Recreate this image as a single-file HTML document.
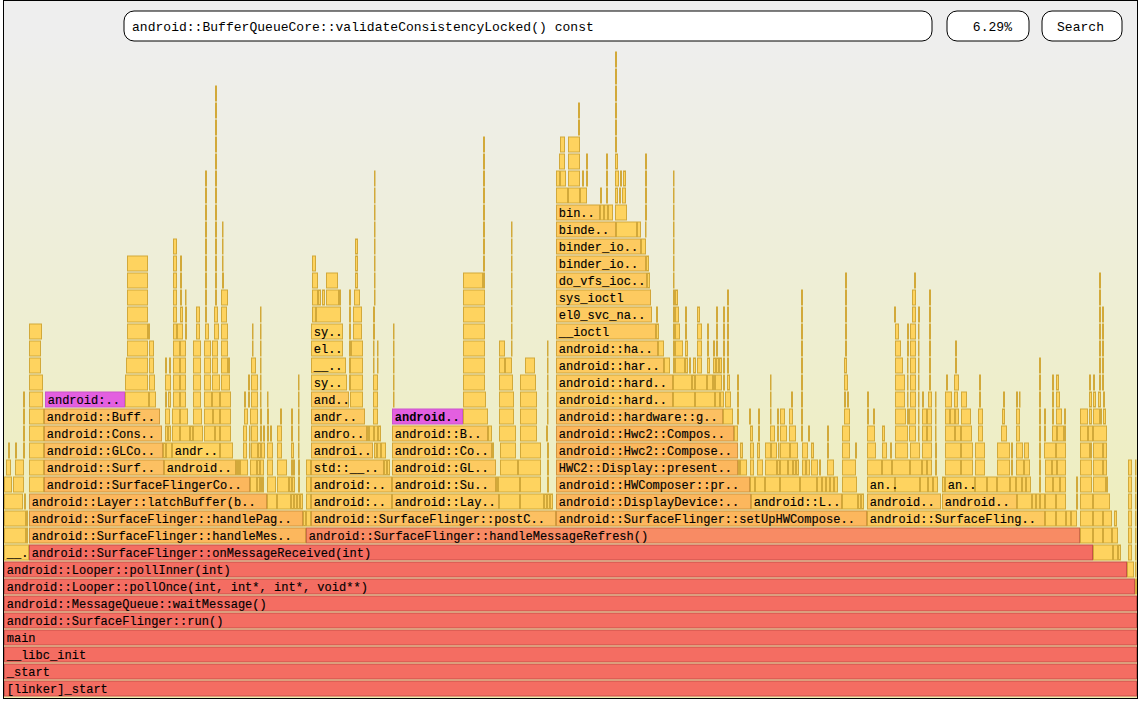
<!DOCTYPE html>
<html><head><meta charset="utf-8"><style>
html,body{margin:0;padding:0;background:#fff;width:1141px;height:702px;overflow:hidden}
#frame{position:absolute;left:3px;top:0;width:1133px;height:697px;border:1px solid #000;
background:linear-gradient(#eeeeee 0%, #eeeeee 5%, #eeeeb0 95%, #eeeeb0 100%);overflow:hidden}
svg{position:absolute;left:0;top:0}
.h text{font-family:"Liberation Mono",monospace;font-size:13px;letter-spacing:0.026px;fill:#000}
.t text{font-family:"Liberation Mono",monospace;font-size:12px;letter-spacing:0.024px;fill:#000;stroke:#000;stroke-width:0.15px}
</style></head><body>
<div id="frame"></div>
<svg width="1141" height="702" viewBox="0 0 1141 702" style="position:absolute;left:0;top:0">
<g fill="#fff" stroke="#000" stroke-width="1">
<rect x="124" y="11" width="808" height="30" rx="10" ry="10"/>
<rect x="947" y="11" width="82" height="30" rx="10" ry="10"/>
<rect x="1042" y="11" width="80" height="30" rx="10" ry="10"/>
</g>
<g class="h">
<text x="132" y="31">android::BufferQueueCore::validateConsistencyLocked() const</text>
<text x="1012" y="31" text-anchor="end">6.29%</text>
<text x="1057" y="31">Search</text>
</g>
<g stroke-width="1" ><rect x="4.5" y="681" width="1132" height="15" fill="#f46d62" stroke="#c85048"/>
<rect x="4.5" y="664" width="1132" height="15" fill="#f46d62" stroke="#c85048"/>
<rect x="4.5" y="647" width="1132" height="15" fill="#f46d62" stroke="#c85048"/>
<rect x="4.5" y="630" width="1132" height="15" fill="#f46d62" stroke="#c85048"/>
<rect x="4.5" y="613" width="1132" height="15" fill="#f46d62" stroke="#c85048"/>
<rect x="4.5" y="596" width="1132" height="15" fill="#f46d62" stroke="#c85048"/>
<rect x="4.5" y="579" width="1130" height="15" fill="#f46d62" stroke="#c85048"/>
<rect x="1135.5" y="579" width="1" height="15" fill="#fed35f" stroke="#d2a93a"/>
<rect x="4.5" y="562" width="1122" height="15" fill="#f46d62" stroke="#c85048"/>
<rect x="1127.5" y="562" width="6" height="15" fill="#fed35f" stroke="#d2a93a"/>
<rect x="1135.5" y="562" width="0.5" height="15" fill="#fed35f" stroke="#d2a93a"/>
<rect x="4.5" y="545" width="24" height="15" fill="#fed35f" stroke="#d2a93a"/>
<rect x="29.5" y="545" width="1063" height="15" fill="#f46d62" stroke="#c85048"/>
<rect x="1093.5" y="545" width="19" height="15" fill="#fed35f" stroke="#d2a93a"/>
<rect x="1113.5" y="545" width="4" height="15" fill="#fed35f" stroke="#d2a93a"/>
<rect x="1118.5" y="545" width="2" height="15" fill="#fed35f" stroke="#d2a93a"/>
<rect x="1128.5" y="545" width="3" height="15" fill="#fed35f" stroke="#d2a93a"/>
<rect x="1135.5" y="545" width="0.5" height="15" fill="#fed35f" stroke="#d2a93a"/>
<rect x="4.5" y="528" width="21" height="15" fill="#fed35f" stroke="#d2a93a"/>
<rect x="26.5" y="528" width="1" height="15" fill="#fed35f" stroke="#d2a93a"/>
<rect x="29.5" y="528" width="276" height="15" fill="#fcb75d" stroke="#d2953e"/>
<rect x="306.5" y="528" width="773" height="15" fill="#f88b64" stroke="#cc6a48"/>
<rect x="1080.5" y="528" width="12" height="15" fill="#fed35f" stroke="#d2a93a"/>
<rect x="1093.5" y="528" width="9" height="15" fill="#fed35f" stroke="#d2a93a"/>
<rect x="1103.5" y="528" width="8" height="15" fill="#fed35f" stroke="#d2a93a"/>
<rect x="1112.5" y="528" width="5" height="15" fill="#fed35f" stroke="#d2a93a"/>
<rect x="1128.5" y="528" width="3" height="15" fill="#fed35f" stroke="#d2a93a"/>
<rect x="1135.5" y="528" width="0.5" height="15" fill="#fed35f" stroke="#d2a93a"/>
<rect x="4.5" y="511" width="21" height="15" fill="#fed35f" stroke="#d2a93a"/>
<rect x="26.5" y="511" width="1" height="15" fill="#fed35f" stroke="#d2a93a"/>
<rect x="29.5" y="511" width="273" height="15" fill="#fcb75d" stroke="#d2953e"/>
<rect x="303.5" y="511" width="2" height="15" fill="#fed35f" stroke="#d2a93a"/>
<rect x="306.5" y="511" width="4" height="15" fill="#fed35f" stroke="#d2a93a"/>
<rect x="311.5" y="511" width="244" height="15" fill="#fcc062" stroke="#d29c3e"/>
<rect x="556.5" y="511" width="310" height="15" fill="#fcb75d" stroke="#d2953e"/>
<rect x="867.5" y="511" width="177" height="15" fill="#fdca60" stroke="#d2a53a"/>
<rect x="1045.5" y="511" width="10" height="15" fill="#fed35f" stroke="#d2a93a"/>
<rect x="1056.5" y="511" width="9" height="15" fill="#fed35f" stroke="#d2a93a"/>
<rect x="1066.5" y="511" width="4" height="15" fill="#fed35f" stroke="#d2a93a"/>
<rect x="1071.5" y="511" width="5" height="15" fill="#fed35f" stroke="#d2a93a"/>
<rect x="1080.5" y="511" width="12" height="15" fill="#fed35f" stroke="#d2a93a"/>
<rect x="1093.5" y="511" width="9" height="15" fill="#fed35f" stroke="#d2a93a"/>
<rect x="1103.5" y="511" width="8" height="15" fill="#fed35f" stroke="#d2a93a"/>
<rect x="1114.5" y="511" width="2" height="15" fill="#fed35f" stroke="#d2a93a"/>
<rect x="1128.5" y="511" width="3" height="15" fill="#fed35f" stroke="#d2a93a"/>
<rect x="1135.5" y="511" width="0.5" height="15" fill="#fed35f" stroke="#d2a93a"/>
<rect x="4.5" y="494" width="18" height="15" fill="#fed35f" stroke="#d2a93a"/>
<rect x="24.5" y="494" width="1" height="15" fill="#fed35f" stroke="#d2a93a"/>
<rect x="29.5" y="494" width="237" height="15" fill="#fcb75d" stroke="#d2953e"/>
<rect x="267.5" y="494" width="9" height="15" fill="#fed35f" stroke="#d2a93a"/>
<rect x="277.5" y="494" width="13" height="15" fill="#fed35f" stroke="#d2a93a"/>
<rect x="291.5" y="494" width="2" height="15" fill="#fed35f" stroke="#d2a93a"/>
<rect x="294.5" y="494" width="2" height="15" fill="#fed35f" stroke="#d2a93a"/>
<rect x="297.5" y="494" width="2" height="15" fill="#fed35f" stroke="#d2a93a"/>
<rect x="300.5" y="494" width="2" height="15" fill="#fed35f" stroke="#d2a93a"/>
<rect x="306.5" y="494" width="4" height="15" fill="#fed35f" stroke="#d2a93a"/>
<rect x="311.5" y="494" width="80" height="15" fill="#fdca60" stroke="#d2a53a"/>
<rect x="392.5" y="494" width="106" height="15" fill="#fdca60" stroke="#d2a53a"/>
<rect x="499.5" y="494" width="20" height="15" fill="#fed35f" stroke="#d2a93a"/>
<rect x="520.5" y="494" width="23" height="15" fill="#fed35f" stroke="#d2a93a"/>
<rect x="544.5" y="494" width="2" height="15" fill="#fed35f" stroke="#d2a93a"/>
<rect x="547.5" y="494" width="2" height="15" fill="#fed35f" stroke="#d2a93a"/>
<rect x="550.5" y="494" width="2" height="15" fill="#fed35f" stroke="#d2a93a"/>
<rect x="556.5" y="494" width="194" height="15" fill="#fcb75d" stroke="#d2953e"/>
<rect x="751.5" y="494" width="90" height="15" fill="#fdca60" stroke="#d2a53a"/>
<rect x="842.5" y="494" width="15" height="15" fill="#fed35f" stroke="#d2a93a"/>
<rect x="858.5" y="494" width="2" height="15" fill="#fed35f" stroke="#d2a93a"/>
<rect x="861.5" y="494" width="2" height="15" fill="#fed35f" stroke="#d2a93a"/>
<rect x="867.5" y="494" width="73" height="15" fill="#fdca60" stroke="#d2a53a"/>
<rect x="942.5" y="494" width="74" height="15" fill="#fdca60" stroke="#d2a53a"/>
<rect x="1017.5" y="494" width="14" height="15" fill="#fed35f" stroke="#d2a93a"/>
<rect x="1032.5" y="494" width="3" height="15" fill="#fed35f" stroke="#d2a93a"/>
<rect x="1036.5" y="494" width="3" height="15" fill="#fed35f" stroke="#d2a93a"/>
<rect x="1040.5" y="494" width="4" height="15" fill="#fed35f" stroke="#d2a93a"/>
<rect x="1045.5" y="494" width="10" height="15" fill="#fed35f" stroke="#d2a93a"/>
<rect x="1056.5" y="494" width="9" height="15" fill="#fed35f" stroke="#d2a93a"/>
<rect x="1076.5" y="494" width="1" height="15" fill="#fed35f" stroke="#d2a93a"/>
<rect x="1080.5" y="494" width="12" height="15" fill="#fed35f" stroke="#d2a93a"/>
<rect x="1093.5" y="494" width="16" height="15" fill="#fed35f" stroke="#d2a93a"/>
<rect x="1128.5" y="494" width="3" height="15" fill="#fed35f" stroke="#d2a93a"/>
<rect x="1135.5" y="494" width="0.5" height="15" fill="#fed35f" stroke="#d2a93a"/>
<rect x="4.5" y="477" width="7" height="15" fill="#fed35f" stroke="#d2a93a"/>
<rect x="13.5" y="477" width="10" height="15" fill="#fed35f" stroke="#d2a93a"/>
<rect x="29.5" y="477" width="14" height="15" fill="#fed35f" stroke="#d2a93a"/>
<rect x="44.5" y="477" width="205" height="15" fill="#fcb75d" stroke="#d2953e"/>
<rect x="250.5" y="477" width="6" height="15" fill="#fed35f" stroke="#d2a93a"/>
<rect x="257.5" y="477" width="2" height="15" fill="#fed35f" stroke="#d2a93a"/>
<rect x="260.5" y="477" width="1" height="15" fill="#fed35f" stroke="#d2a93a"/>
<rect x="262.5" y="477" width="1" height="15" fill="#fed35f" stroke="#d2a93a"/>
<rect x="267.5" y="477" width="8" height="15" fill="#fed35f" stroke="#d2a93a"/>
<rect x="277.5" y="477" width="11" height="15" fill="#fed35f" stroke="#d2a93a"/>
<rect x="289.5" y="477" width="2" height="15" fill="#fed35f" stroke="#d2a93a"/>
<rect x="292.5" y="477" width="2" height="15" fill="#fed35f" stroke="#d2a93a"/>
<rect x="298.5" y="477" width="1" height="15" fill="#fed35f" stroke="#d2a93a"/>
<rect x="306.5" y="477" width="4" height="15" fill="#fed35f" stroke="#d2a93a"/>
<rect x="311.5" y="477" width="80" height="15" fill="#fdca60" stroke="#d2a53a"/>
<rect x="392.5" y="477" width="103" height="15" fill="#fdca60" stroke="#d2a53a"/>
<rect x="496.5" y="477" width="1" height="15" fill="#fed35f" stroke="#d2a93a"/>
<rect x="498.5" y="477" width="21" height="15" fill="#fed35f" stroke="#d2a93a"/>
<rect x="520.5" y="477" width="20" height="15" fill="#fed35f" stroke="#d2a93a"/>
<rect x="547.5" y="477" width="1" height="15" fill="#fed35f" stroke="#d2a93a"/>
<rect x="556.5" y="477" width="193" height="15" fill="#fcb75d" stroke="#d2953e"/>
<rect x="750.5" y="477" width="4" height="15" fill="#fed35f" stroke="#d2a93a"/>
<rect x="755.5" y="477" width="9" height="15" fill="#fed35f" stroke="#d2a93a"/>
<rect x="765.5" y="477" width="14" height="15" fill="#fed35f" stroke="#d2a93a"/>
<rect x="780.5" y="477" width="19" height="15" fill="#fed35f" stroke="#d2a93a"/>
<rect x="800.5" y="477" width="16" height="15" fill="#fed35f" stroke="#d2a93a"/>
<rect x="817.5" y="477" width="4" height="15" fill="#fed35f" stroke="#d2a93a"/>
<rect x="822.5" y="477" width="3" height="15" fill="#fed35f" stroke="#d2a93a"/>
<rect x="826.5" y="477" width="3" height="15" fill="#fed35f" stroke="#d2a93a"/>
<rect x="830.5" y="477" width="3" height="15" fill="#fed35f" stroke="#d2a93a"/>
<rect x="834.5" y="477" width="3" height="15" fill="#fed35f" stroke="#d2a93a"/>
<rect x="842.5" y="477" width="14" height="15" fill="#fed35f" stroke="#d2a93a"/>
<rect x="867.5" y="477" width="27" height="15" fill="#fed35f" stroke="#d2a93a"/>
<rect x="895.5" y="477" width="24" height="15" fill="#fed35f" stroke="#d2a93a"/>
<rect x="920.5" y="477" width="7" height="15" fill="#fed35f" stroke="#d2a93a"/>
<rect x="928.5" y="477" width="4" height="15" fill="#fed35f" stroke="#d2a93a"/>
<rect x="933.5" y="477" width="4" height="15" fill="#fed35f" stroke="#d2a93a"/>
<rect x="942.5" y="477" width="2" height="15" fill="#fed35f" stroke="#d2a93a"/>
<rect x="945.5" y="477" width="29" height="15" fill="#fed35f" stroke="#d2a93a"/>
<rect x="975.5" y="477" width="11" height="15" fill="#fed35f" stroke="#d2a93a"/>
<rect x="987.5" y="477" width="9" height="15" fill="#fed35f" stroke="#d2a93a"/>
<rect x="997.5" y="477" width="12" height="15" fill="#fed35f" stroke="#d2a93a"/>
<rect x="1010.5" y="477" width="5" height="15" fill="#fed35f" stroke="#d2a93a"/>
<rect x="1016.5" y="477" width="5" height="15" fill="#fed35f" stroke="#d2a93a"/>
<rect x="1022.5" y="477" width="3" height="15" fill="#fed35f" stroke="#d2a93a"/>
<rect x="1026.5" y="477" width="4" height="15" fill="#fed35f" stroke="#d2a93a"/>
<rect x="1039.5" y="477" width="1" height="15" fill="#fed35f" stroke="#d2a93a"/>
<rect x="1045.5" y="477" width="7" height="15" fill="#fed35f" stroke="#d2a93a"/>
<rect x="1053.5" y="477" width="6" height="15" fill="#fed35f" stroke="#d2a93a"/>
<rect x="1060.5" y="477" width="5" height="15" fill="#fed35f" stroke="#d2a93a"/>
<rect x="1076.5" y="477" width="1" height="15" fill="#fed35f" stroke="#d2a93a"/>
<rect x="1080.5" y="477" width="11" height="15" fill="#fed35f" stroke="#d2a93a"/>
<rect x="1093.5" y="477" width="12" height="15" fill="#fed35f" stroke="#d2a93a"/>
<rect x="1106.5" y="477" width="1" height="15" fill="#fed35f" stroke="#d2a93a"/>
<rect x="1128.5" y="477" width="3" height="15" fill="#fed35f" stroke="#d2a93a"/>
<rect x="1135.5" y="477" width="0.5" height="15" fill="#fed35f" stroke="#d2a93a"/>
<rect x="6.5" y="460" width="4" height="15" fill="#fed35f" stroke="#d2a93a"/>
<rect x="15.5" y="460" width="8" height="15" fill="#fed35f" stroke="#d2a93a"/>
<rect x="29.5" y="460" width="14" height="15" fill="#fed35f" stroke="#d2a93a"/>
<rect x="44.5" y="460" width="119" height="15" fill="#fcc062" stroke="#d29c3e"/>
<rect x="164.5" y="460" width="71" height="15" fill="#fdca60" stroke="#d2a53a"/>
<rect x="236.5" y="460" width="1" height="15" fill="#fed35f" stroke="#d2a93a"/>
<rect x="238.5" y="460" width="1" height="15" fill="#fed35f" stroke="#d2a93a"/>
<rect x="240.5" y="460" width="7" height="15" fill="#fed35f" stroke="#d2a93a"/>
<rect x="250.5" y="460" width="6" height="15" fill="#fed35f" stroke="#d2a93a"/>
<rect x="257.5" y="460" width="2" height="15" fill="#fed35f" stroke="#d2a93a"/>
<rect x="260.5" y="460" width="3" height="15" fill="#fed35f" stroke="#d2a93a"/>
<rect x="267.5" y="460" width="5" height="15" fill="#fed35f" stroke="#d2a93a"/>
<rect x="277.5" y="460" width="9" height="15" fill="#fed35f" stroke="#d2a93a"/>
<rect x="291.5" y="460" width="1" height="15" fill="#fed35f" stroke="#d2a93a"/>
<rect x="293.5" y="460" width="1" height="15" fill="#fed35f" stroke="#d2a93a"/>
<rect x="298.5" y="460" width="1" height="15" fill="#fed35f" stroke="#d2a93a"/>
<rect x="306.5" y="460" width="4" height="15" fill="#fed35f" stroke="#d2a93a"/>
<rect x="311.5" y="460" width="72" height="15" fill="#fdca60" stroke="#d2a53a"/>
<rect x="384.5" y="460" width="2" height="15" fill="#fed35f" stroke="#d2a93a"/>
<rect x="387.5" y="460" width="2" height="15" fill="#fed35f" stroke="#d2a93a"/>
<rect x="392.5" y="460" width="103" height="15" fill="#fdca60" stroke="#d2a53a"/>
<rect x="500.5" y="460" width="17" height="15" fill="#fed35f" stroke="#d2a93a"/>
<rect x="518.5" y="460" width="22" height="15" fill="#fed35f" stroke="#d2a93a"/>
<rect x="547.5" y="460" width="1" height="15" fill="#fed35f" stroke="#d2a93a"/>
<rect x="556.5" y="460" width="181" height="15" fill="#fcb75d" stroke="#d2953e"/>
<rect x="738.5" y="460" width="1" height="15" fill="#fed35f" stroke="#d2a93a"/>
<rect x="740.5" y="460" width="6" height="15" fill="#fed35f" stroke="#d2a93a"/>
<rect x="750.5" y="460" width="3" height="15" fill="#fed35f" stroke="#d2a93a"/>
<rect x="757.5" y="460" width="5" height="15" fill="#fed35f" stroke="#d2a93a"/>
<rect x="765.5" y="460" width="11" height="15" fill="#fed35f" stroke="#d2a93a"/>
<rect x="777.5" y="460" width="2" height="15" fill="#fed35f" stroke="#d2a93a"/>
<rect x="780.5" y="460" width="7" height="15" fill="#fed35f" stroke="#d2a93a"/>
<rect x="788.5" y="460" width="4" height="15" fill="#fed35f" stroke="#d2a93a"/>
<rect x="793.5" y="460" width="2" height="15" fill="#fed35f" stroke="#d2a93a"/>
<rect x="796.5" y="460" width="2" height="15" fill="#fed35f" stroke="#d2a93a"/>
<rect x="802.5" y="460" width="3" height="15" fill="#fed35f" stroke="#d2a93a"/>
<rect x="806.5" y="460" width="3" height="15" fill="#fed35f" stroke="#d2a93a"/>
<rect x="811.5" y="460" width="6" height="15" fill="#fed35f" stroke="#d2a93a"/>
<rect x="819.5" y="460" width="1" height="15" fill="#fed35f" stroke="#d2a93a"/>
<rect x="827.5" y="460" width="6" height="15" fill="#fed35f" stroke="#d2a93a"/>
<rect x="842.5" y="460" width="13" height="15" fill="#fed35f" stroke="#d2a93a"/>
<rect x="867.5" y="460" width="14" height="15" fill="#fed35f" stroke="#d2a93a"/>
<rect x="882.5" y="460" width="9" height="15" fill="#fed35f" stroke="#d2a93a"/>
<rect x="892.5" y="460" width="17" height="15" fill="#fed35f" stroke="#d2a93a"/>
<rect x="910.5" y="460" width="11" height="15" fill="#fed35f" stroke="#d2a93a"/>
<rect x="922.5" y="460" width="4" height="15" fill="#fed35f" stroke="#d2a93a"/>
<rect x="927.5" y="460" width="4" height="15" fill="#fed35f" stroke="#d2a93a"/>
<rect x="935.5" y="460" width="1" height="15" fill="#fed35f" stroke="#d2a93a"/>
<rect x="945.5" y="460" width="15" height="15" fill="#fed35f" stroke="#d2a93a"/>
<rect x="961.5" y="460" width="11" height="15" fill="#fed35f" stroke="#d2a93a"/>
<rect x="975.5" y="460" width="9" height="15" fill="#fed35f" stroke="#d2a93a"/>
<rect x="997.5" y="460" width="12" height="15" fill="#fed35f" stroke="#d2a93a"/>
<rect x="1011.5" y="460" width="1" height="15" fill="#fed35f" stroke="#d2a93a"/>
<rect x="1016.5" y="460" width="7" height="15" fill="#fed35f" stroke="#d2a93a"/>
<rect x="1024.5" y="460" width="5" height="15" fill="#fed35f" stroke="#d2a93a"/>
<rect x="1039.5" y="460" width="1" height="15" fill="#fed35f" stroke="#d2a93a"/>
<rect x="1045.5" y="460" width="6" height="15" fill="#fed35f" stroke="#d2a93a"/>
<rect x="1052.5" y="460" width="4" height="15" fill="#fed35f" stroke="#d2a93a"/>
<rect x="1057.5" y="460" width="8" height="15" fill="#fed35f" stroke="#d2a93a"/>
<rect x="1080.5" y="460" width="11" height="15" fill="#fed35f" stroke="#d2a93a"/>
<rect x="1093.5" y="460" width="9" height="15" fill="#fed35f" stroke="#d2a93a"/>
<rect x="1103.5" y="460" width="3" height="15" fill="#fed35f" stroke="#d2a93a"/>
<rect x="1128.5" y="460" width="3" height="15" fill="#fed35f" stroke="#d2a93a"/>
<rect x="1135.5" y="460" width="0.5" height="15" fill="#fed35f" stroke="#d2a93a"/>
<rect x="8.5" y="443" width="1" height="15" fill="#fed35f" stroke="#d2a93a"/>
<rect x="15.5" y="443" width="1" height="15" fill="#fed35f" stroke="#d2a93a"/>
<rect x="23.5" y="443" width="1" height="15" fill="#fed35f" stroke="#d2a93a"/>
<rect x="29.5" y="443" width="14" height="15" fill="#fed35f" stroke="#d2a93a"/>
<rect x="44.5" y="443" width="118" height="15" fill="#fcc062" stroke="#d29c3e"/>
<rect x="163.5" y="443" width="2" height="15" fill="#fed35f" stroke="#d2a93a"/>
<rect x="166.5" y="443" width="5" height="15" fill="#fed35f" stroke="#d2a93a"/>
<rect x="172.5" y="443" width="47" height="15" fill="#fed35f" stroke="#d2a93a"/>
<rect x="220.5" y="443" width="12" height="15" fill="#fed35f" stroke="#d2a93a"/>
<rect x="243.5" y="443" width="3" height="15" fill="#fed35f" stroke="#d2a93a"/>
<rect x="249.5" y="443" width="0.5" height="15" fill="#fed35f" stroke="#d2a93a"/>
<rect x="251.5" y="443" width="6" height="15" fill="#fed35f" stroke="#d2a93a"/>
<rect x="258.5" y="443" width="2" height="15" fill="#fed35f" stroke="#d2a93a"/>
<rect x="261.5" y="443" width="3" height="15" fill="#fed35f" stroke="#d2a93a"/>
<rect x="267.5" y="443" width="5" height="15" fill="#fed35f" stroke="#d2a93a"/>
<rect x="277.5" y="443" width="4" height="15" fill="#fed35f" stroke="#d2a93a"/>
<rect x="291.5" y="443" width="2" height="15" fill="#fed35f" stroke="#d2a93a"/>
<rect x="298.5" y="443" width="0.5" height="15" fill="#fed35f" stroke="#d2a93a"/>
<rect x="311.5" y="443" width="61" height="15" fill="#fdca60" stroke="#d2a53a"/>
<rect x="374.5" y="443" width="2" height="15" fill="#fed35f" stroke="#d2a93a"/>
<rect x="377.5" y="443" width="3" height="15" fill="#fed35f" stroke="#d2a93a"/>
<rect x="381.5" y="443" width="4" height="15" fill="#fed35f" stroke="#d2a93a"/>
<rect x="392.5" y="443" width="99" height="15" fill="#fdca60" stroke="#d2a53a"/>
<rect x="492.5" y="443" width="1" height="15" fill="#fed35f" stroke="#d2a93a"/>
<rect x="500.5" y="443" width="15" height="15" fill="#fed35f" stroke="#d2a93a"/>
<rect x="520.5" y="443" width="20" height="15" fill="#fed35f" stroke="#d2a93a"/>
<rect x="547.5" y="443" width="1" height="15" fill="#fed35f" stroke="#d2a93a"/>
<rect x="556.5" y="443" width="181" height="15" fill="#fcb75d" stroke="#d2953e"/>
<rect x="740.5" y="443" width="2" height="15" fill="#fed35f" stroke="#d2a93a"/>
<rect x="750.5" y="443" width="3" height="15" fill="#fed35f" stroke="#d2a93a"/>
<rect x="757.5" y="443" width="2" height="15" fill="#fed35f" stroke="#d2a93a"/>
<rect x="765.5" y="443" width="5" height="15" fill="#fed35f" stroke="#d2a93a"/>
<rect x="771.5" y="443" width="5" height="15" fill="#fed35f" stroke="#d2a93a"/>
<rect x="778.5" y="443" width="0.5" height="15" fill="#fed35f" stroke="#d2a93a"/>
<rect x="780.5" y="443" width="9" height="15" fill="#fed35f" stroke="#d2a93a"/>
<rect x="790.5" y="443" width="7" height="15" fill="#fed35f" stroke="#d2a93a"/>
<rect x="802.5" y="443" width="5" height="15" fill="#fed35f" stroke="#d2a93a"/>
<rect x="811.5" y="443" width="2" height="15" fill="#fed35f" stroke="#d2a93a"/>
<rect x="827.5" y="443" width="1" height="15" fill="#fed35f" stroke="#d2a93a"/>
<rect x="842.5" y="443" width="7" height="15" fill="#fed35f" stroke="#d2a93a"/>
<rect x="855.5" y="443" width="1" height="15" fill="#fed35f" stroke="#d2a93a"/>
<rect x="867.5" y="443" width="8" height="15" fill="#fed35f" stroke="#d2a93a"/>
<rect x="882.5" y="443" width="4" height="15" fill="#fed35f" stroke="#d2a93a"/>
<rect x="890.5" y="443" width="1" height="15" fill="#fed35f" stroke="#d2a93a"/>
<rect x="895.5" y="443" width="12" height="15" fill="#fed35f" stroke="#d2a93a"/>
<rect x="910.5" y="443" width="9" height="15" fill="#fed35f" stroke="#d2a93a"/>
<rect x="922.5" y="443" width="9" height="15" fill="#fed35f" stroke="#d2a93a"/>
<rect x="935.5" y="443" width="1" height="15" fill="#fed35f" stroke="#d2a93a"/>
<rect x="945.5" y="443" width="15" height="15" fill="#fed35f" stroke="#d2a93a"/>
<rect x="961.5" y="443" width="11" height="15" fill="#fed35f" stroke="#d2a93a"/>
<rect x="975.5" y="443" width="9" height="15" fill="#fed35f" stroke="#d2a93a"/>
<rect x="997.5" y="443" width="12" height="15" fill="#fed35f" stroke="#d2a93a"/>
<rect x="1011.5" y="443" width="1" height="15" fill="#fed35f" stroke="#d2a93a"/>
<rect x="1016.5" y="443" width="6" height="15" fill="#fed35f" stroke="#d2a93a"/>
<rect x="1024.5" y="443" width="4" height="15" fill="#fed35f" stroke="#d2a93a"/>
<rect x="1039.5" y="443" width="1" height="15" fill="#fed35f" stroke="#d2a93a"/>
<rect x="1044.5" y="443" width="11" height="15" fill="#fed35f" stroke="#d2a93a"/>
<rect x="1056.5" y="443" width="9" height="15" fill="#fed35f" stroke="#d2a93a"/>
<rect x="1080.5" y="443" width="9" height="15" fill="#fed35f" stroke="#d2a93a"/>
<rect x="1090.5" y="443" width="1" height="15" fill="#fed35f" stroke="#d2a93a"/>
<rect x="1093.5" y="443" width="9" height="15" fill="#fed35f" stroke="#d2a93a"/>
<rect x="1103.5" y="443" width="3" height="15" fill="#fed35f" stroke="#d2a93a"/>
<rect x="23.5" y="426" width="1" height="15" fill="#fed35f" stroke="#d2a93a"/>
<rect x="29.5" y="426" width="14" height="15" fill="#fed35f" stroke="#d2a93a"/>
<rect x="44.5" y="426" width="117" height="15" fill="#fcc062" stroke="#d29c3e"/>
<rect x="165.5" y="426" width="2" height="15" fill="#fed35f" stroke="#d2a93a"/>
<rect x="168.5" y="426" width="2" height="15" fill="#fed35f" stroke="#d2a93a"/>
<rect x="172.5" y="426" width="7" height="15" fill="#fed35f" stroke="#d2a93a"/>
<rect x="180.5" y="426" width="9" height="15" fill="#fed35f" stroke="#d2a93a"/>
<rect x="190.5" y="426" width="2" height="15" fill="#fed35f" stroke="#d2a93a"/>
<rect x="193.5" y="426" width="9" height="15" fill="#fed35f" stroke="#d2a93a"/>
<rect x="204.5" y="426" width="10" height="15" fill="#fed35f" stroke="#d2a93a"/>
<rect x="215.5" y="426" width="4" height="15" fill="#fed35f" stroke="#d2a93a"/>
<rect x="220.5" y="426" width="10" height="15" fill="#fed35f" stroke="#d2a93a"/>
<rect x="243.5" y="426" width="3" height="15" fill="#fed35f" stroke="#d2a93a"/>
<rect x="249.5" y="426" width="0.5" height="15" fill="#fed35f" stroke="#d2a93a"/>
<rect x="251.5" y="426" width="6" height="15" fill="#fed35f" stroke="#d2a93a"/>
<rect x="260.5" y="426" width="1" height="15" fill="#fed35f" stroke="#d2a93a"/>
<rect x="263.5" y="426" width="1" height="15" fill="#fed35f" stroke="#d2a93a"/>
<rect x="267.5" y="426" width="1" height="15" fill="#fed35f" stroke="#d2a93a"/>
<rect x="270.5" y="426" width="1" height="15" fill="#fed35f" stroke="#d2a93a"/>
<rect x="277.5" y="426" width="4" height="15" fill="#fed35f" stroke="#d2a93a"/>
<rect x="291.5" y="426" width="1" height="15" fill="#fed35f" stroke="#d2a93a"/>
<rect x="298.5" y="426" width="0.5" height="15" fill="#fed35f" stroke="#d2a93a"/>
<rect x="311.5" y="426" width="55" height="15" fill="#fdca60" stroke="#d2a53a"/>
<rect x="367.5" y="426" width="1" height="15" fill="#fed35f" stroke="#d2a93a"/>
<rect x="369.5" y="426" width="4" height="15" fill="#fed35f" stroke="#d2a93a"/>
<rect x="374.5" y="426" width="3" height="15" fill="#fed35f" stroke="#d2a93a"/>
<rect x="378.5" y="426" width="2" height="15" fill="#fed35f" stroke="#d2a93a"/>
<rect x="392.5" y="426" width="95" height="15" fill="#fdca60" stroke="#d2a53a"/>
<rect x="488.5" y="426" width="3" height="15" fill="#fed35f" stroke="#d2a93a"/>
<rect x="499.5" y="426" width="16" height="15" fill="#fed35f" stroke="#d2a93a"/>
<rect x="520.5" y="426" width="16" height="15" fill="#fed35f" stroke="#d2a93a"/>
<rect x="546.5" y="426" width="1" height="15" fill="#fed35f" stroke="#d2a93a"/>
<rect x="556.5" y="426" width="177" height="15" fill="#fcb75d" stroke="#d2953e"/>
<rect x="734.5" y="426" width="3" height="15" fill="#fed35f" stroke="#d2a93a"/>
<rect x="750.5" y="426" width="2" height="15" fill="#fed35f" stroke="#d2a93a"/>
<rect x="758.5" y="426" width="1" height="15" fill="#fed35f" stroke="#d2a93a"/>
<rect x="770.5" y="426" width="4" height="15" fill="#fed35f" stroke="#d2a93a"/>
<rect x="777.5" y="426" width="1" height="15" fill="#fed35f" stroke="#d2a93a"/>
<rect x="780.5" y="426" width="6" height="15" fill="#fed35f" stroke="#d2a93a"/>
<rect x="789.5" y="426" width="6" height="15" fill="#fed35f" stroke="#d2a93a"/>
<rect x="801.5" y="426" width="1" height="15" fill="#fed35f" stroke="#d2a93a"/>
<rect x="808.5" y="426" width="1" height="15" fill="#fed35f" stroke="#d2a93a"/>
<rect x="827.5" y="426" width="1" height="15" fill="#fed35f" stroke="#d2a93a"/>
<rect x="842.5" y="426" width="7" height="15" fill="#fed35f" stroke="#d2a93a"/>
<rect x="867.5" y="426" width="7" height="15" fill="#fed35f" stroke="#d2a93a"/>
<rect x="882.5" y="426" width="2" height="15" fill="#fed35f" stroke="#d2a93a"/>
<rect x="895.5" y="426" width="12" height="15" fill="#fed35f" stroke="#d2a93a"/>
<rect x="909.5" y="426" width="6" height="15" fill="#fed35f" stroke="#d2a93a"/>
<rect x="918.5" y="426" width="0.5" height="15" fill="#fed35f" stroke="#d2a93a"/>
<rect x="922.5" y="426" width="4" height="15" fill="#fed35f" stroke="#d2a93a"/>
<rect x="927.5" y="426" width="4" height="15" fill="#fed35f" stroke="#d2a93a"/>
<rect x="935.5" y="426" width="0.5" height="15" fill="#fed35f" stroke="#d2a93a"/>
<rect x="945.5" y="426" width="9" height="15" fill="#fed35f" stroke="#d2a93a"/>
<rect x="955.5" y="426" width="5" height="15" fill="#fed35f" stroke="#d2a93a"/>
<rect x="961.5" y="426" width="10" height="15" fill="#fed35f" stroke="#d2a93a"/>
<rect x="978.5" y="426" width="4" height="15" fill="#fed35f" stroke="#d2a93a"/>
<rect x="1001.5" y="426" width="5" height="15" fill="#fed35f" stroke="#d2a93a"/>
<rect x="1016.5" y="426" width="3" height="15" fill="#fed35f" stroke="#d2a93a"/>
<rect x="1039.5" y="426" width="1" height="15" fill="#fed35f" stroke="#d2a93a"/>
<rect x="1044.5" y="426" width="1" height="15" fill="#fed35f" stroke="#d2a93a"/>
<rect x="1052.5" y="426" width="4" height="15" fill="#fed35f" stroke="#d2a93a"/>
<rect x="1057.5" y="426" width="6" height="15" fill="#fed35f" stroke="#d2a93a"/>
<rect x="1064.5" y="426" width="1" height="15" fill="#fed35f" stroke="#d2a93a"/>
<rect x="1080.5" y="426" width="7" height="15" fill="#fed35f" stroke="#d2a93a"/>
<rect x="1088.5" y="426" width="4" height="15" fill="#fed35f" stroke="#d2a93a"/>
<rect x="1093.5" y="426" width="13" height="15" fill="#fed35f" stroke="#d2a93a"/>
<rect x="23.5" y="409" width="1" height="15" fill="#fed35f" stroke="#d2a93a"/>
<rect x="29.5" y="409" width="14" height="15" fill="#fed35f" stroke="#d2a93a"/>
<rect x="44.5" y="409" width="115" height="15" fill="#fcc062" stroke="#d29c3e"/>
<rect x="165.5" y="409" width="4" height="15" fill="#fed35f" stroke="#d2a93a"/>
<rect x="172.5" y="409" width="7" height="15" fill="#fed35f" stroke="#d2a93a"/>
<rect x="180.5" y="409" width="7" height="15" fill="#fed35f" stroke="#d2a93a"/>
<rect x="193.5" y="409" width="8" height="15" fill="#fed35f" stroke="#d2a93a"/>
<rect x="204.5" y="409" width="8" height="15" fill="#fed35f" stroke="#d2a93a"/>
<rect x="213.5" y="409" width="6" height="15" fill="#fed35f" stroke="#d2a93a"/>
<rect x="220.5" y="409" width="10" height="15" fill="#fed35f" stroke="#d2a93a"/>
<rect x="244.5" y="409" width="3" height="15" fill="#fed35f" stroke="#d2a93a"/>
<rect x="250.5" y="409" width="7" height="15" fill="#fed35f" stroke="#d2a93a"/>
<rect x="260.5" y="409" width="1" height="15" fill="#fed35f" stroke="#d2a93a"/>
<rect x="267.5" y="409" width="1" height="15" fill="#fed35f" stroke="#d2a93a"/>
<rect x="280.5" y="409" width="1" height="15" fill="#fed35f" stroke="#d2a93a"/>
<rect x="291.5" y="409" width="1" height="15" fill="#fed35f" stroke="#d2a93a"/>
<rect x="298.5" y="409" width="0.5" height="15" fill="#fed35f" stroke="#d2a93a"/>
<rect x="311.5" y="409" width="53" height="15" fill="#fdca60" stroke="#d2a53a"/>
<rect x="373.5" y="409" width="4" height="15" fill="#fed35f" stroke="#d2a93a"/>
<rect x="392.5" y="409" width="70" height="15" fill="#e35fe0" stroke="#cc55cc"/>
<rect x="463.5" y="409" width="24" height="15" fill="#fed35f" stroke="#d2a93a"/>
<rect x="499.5" y="409" width="14" height="15" fill="#fed35f" stroke="#d2a93a"/>
<rect x="520.5" y="409" width="16" height="15" fill="#fed35f" stroke="#d2a93a"/>
<rect x="547.5" y="409" width="0.5" height="15" fill="#fed35f" stroke="#d2a93a"/>
<rect x="556.5" y="409" width="166" height="15" fill="#fcc062" stroke="#d29c3e"/>
<rect x="723.5" y="409" width="9" height="15" fill="#fed35f" stroke="#d2a93a"/>
<rect x="737.5" y="409" width="1" height="15" fill="#fed35f" stroke="#d2a93a"/>
<rect x="749.5" y="409" width="1" height="15" fill="#fed35f" stroke="#d2a93a"/>
<rect x="758.5" y="409" width="1" height="15" fill="#fed35f" stroke="#d2a93a"/>
<rect x="770.5" y="409" width="0.5" height="15" fill="#fed35f" stroke="#d2a93a"/>
<rect x="777.5" y="409" width="1" height="15" fill="#fed35f" stroke="#d2a93a"/>
<rect x="780.5" y="409" width="4" height="15" fill="#fed35f" stroke="#d2a93a"/>
<rect x="789.5" y="409" width="3" height="15" fill="#fed35f" stroke="#d2a93a"/>
<rect x="801.5" y="409" width="1" height="15" fill="#fed35f" stroke="#d2a93a"/>
<rect x="844.5" y="409" width="5" height="15" fill="#fed35f" stroke="#d2a93a"/>
<rect x="867.5" y="409" width="1" height="15" fill="#fed35f" stroke="#d2a93a"/>
<rect x="873.5" y="409" width="1" height="15" fill="#fed35f" stroke="#d2a93a"/>
<rect x="895.5" y="409" width="10" height="15" fill="#fed35f" stroke="#d2a93a"/>
<rect x="907.5" y="409" width="1" height="15" fill="#fed35f" stroke="#d2a93a"/>
<rect x="909.5" y="409" width="6" height="15" fill="#fed35f" stroke="#d2a93a"/>
<rect x="918.5" y="409" width="0.5" height="15" fill="#fed35f" stroke="#d2a93a"/>
<rect x="922.5" y="409" width="4" height="15" fill="#fed35f" stroke="#d2a93a"/>
<rect x="927.5" y="409" width="4" height="15" fill="#fed35f" stroke="#d2a93a"/>
<rect x="935.5" y="409" width="0.5" height="15" fill="#fed35f" stroke="#d2a93a"/>
<rect x="945.5" y="409" width="4" height="15" fill="#fed35f" stroke="#d2a93a"/>
<rect x="950.5" y="409" width="4" height="15" fill="#fed35f" stroke="#d2a93a"/>
<rect x="955.5" y="409" width="3" height="15" fill="#fed35f" stroke="#d2a93a"/>
<rect x="961.5" y="409" width="9" height="15" fill="#fed35f" stroke="#d2a93a"/>
<rect x="978.5" y="409" width="4" height="15" fill="#fed35f" stroke="#d2a93a"/>
<rect x="1002.5" y="409" width="2" height="15" fill="#fed35f" stroke="#d2a93a"/>
<rect x="1016.5" y="409" width="3" height="15" fill="#fed35f" stroke="#d2a93a"/>
<rect x="1039.5" y="409" width="1" height="15" fill="#fed35f" stroke="#d2a93a"/>
<rect x="1044.5" y="409" width="1" height="15" fill="#fed35f" stroke="#d2a93a"/>
<rect x="1052.5" y="409" width="1" height="15" fill="#fed35f" stroke="#d2a93a"/>
<rect x="1056.5" y="409" width="5" height="15" fill="#fed35f" stroke="#d2a93a"/>
<rect x="1064.5" y="409" width="1" height="15" fill="#fed35f" stroke="#d2a93a"/>
<rect x="1080.5" y="409" width="7" height="15" fill="#fed35f" stroke="#d2a93a"/>
<rect x="1089.5" y="409" width="2" height="15" fill="#fed35f" stroke="#d2a93a"/>
<rect x="1093.5" y="409" width="6" height="15" fill="#fed35f" stroke="#d2a93a"/>
<rect x="1100.5" y="409" width="1" height="15" fill="#fed35f" stroke="#d2a93a"/>
<rect x="1103.5" y="409" width="2" height="15" fill="#fed35f" stroke="#d2a93a"/>
<rect x="23.5" y="392" width="1" height="15" fill="#fed35f" stroke="#d2a93a"/>
<rect x="29.5" y="392" width="13" height="15" fill="#fed35f" stroke="#d2a93a"/>
<rect x="45.5" y="392" width="79" height="15" fill="#e35fe0" stroke="#cc55cc"/>
<rect x="125.5" y="392" width="23" height="15" fill="#fed35f" stroke="#d2a93a"/>
<rect x="149.5" y="392" width="6" height="15" fill="#fed35f" stroke="#d2a93a"/>
<rect x="165.5" y="392" width="1" height="15" fill="#fed35f" stroke="#d2a93a"/>
<rect x="168.5" y="392" width="2" height="15" fill="#fed35f" stroke="#d2a93a"/>
<rect x="173.5" y="392" width="6" height="15" fill="#fed35f" stroke="#d2a93a"/>
<rect x="180.5" y="392" width="5" height="15" fill="#fed35f" stroke="#d2a93a"/>
<rect x="193.5" y="392" width="7" height="15" fill="#fed35f" stroke="#d2a93a"/>
<rect x="204.5" y="392" width="7" height="15" fill="#fed35f" stroke="#d2a93a"/>
<rect x="212.5" y="392" width="7" height="15" fill="#fed35f" stroke="#d2a93a"/>
<rect x="220.5" y="392" width="10" height="15" fill="#fed35f" stroke="#d2a93a"/>
<rect x="244.5" y="392" width="1" height="15" fill="#fed35f" stroke="#d2a93a"/>
<rect x="248.5" y="392" width="1" height="15" fill="#fed35f" stroke="#d2a93a"/>
<rect x="251.5" y="392" width="6" height="15" fill="#fed35f" stroke="#d2a93a"/>
<rect x="260.5" y="392" width="0.5" height="15" fill="#fed35f" stroke="#d2a93a"/>
<rect x="267.5" y="392" width="0.5" height="15" fill="#fed35f" stroke="#d2a93a"/>
<rect x="298.5" y="392" width="0.5" height="15" fill="#fed35f" stroke="#d2a93a"/>
<rect x="311.5" y="392" width="37" height="15" fill="#fdca60" stroke="#d2a53a"/>
<rect x="350.5" y="392" width="12" height="15" fill="#fed35f" stroke="#d2a93a"/>
<rect x="373.5" y="392" width="4" height="15" fill="#fed35f" stroke="#d2a93a"/>
<rect x="393.5" y="392" width="0.5" height="15" fill="#fed35f" stroke="#d2a93a"/>
<rect x="463.5" y="392" width="22" height="15" fill="#fed35f" stroke="#d2a93a"/>
<rect x="499.5" y="392" width="14" height="15" fill="#fed35f" stroke="#d2a93a"/>
<rect x="520.5" y="392" width="16" height="15" fill="#fed35f" stroke="#d2a93a"/>
<rect x="547.5" y="392" width="0.5" height="15" fill="#fed35f" stroke="#d2a93a"/>
<rect x="556.5" y="392" width="116" height="15" fill="#fdca60" stroke="#d2a53a"/>
<rect x="673.5" y="392" width="21" height="15" fill="#fed35f" stroke="#d2a93a"/>
<rect x="695.5" y="392" width="19" height="15" fill="#fed35f" stroke="#d2a93a"/>
<rect x="715.5" y="392" width="4" height="15" fill="#fed35f" stroke="#d2a93a"/>
<rect x="720.5" y="392" width="3" height="15" fill="#fed35f" stroke="#d2a93a"/>
<rect x="725.5" y="392" width="5" height="15" fill="#fed35f" stroke="#d2a93a"/>
<rect x="737.5" y="392" width="1" height="15" fill="#fed35f" stroke="#d2a93a"/>
<rect x="770.5" y="392" width="0.5" height="15" fill="#fed35f" stroke="#d2a93a"/>
<rect x="791.5" y="392" width="1" height="15" fill="#fed35f" stroke="#d2a93a"/>
<rect x="801.5" y="392" width="1" height="15" fill="#fed35f" stroke="#d2a93a"/>
<rect x="844.5" y="392" width="1" height="15" fill="#fed35f" stroke="#d2a93a"/>
<rect x="847.5" y="392" width="1" height="15" fill="#fed35f" stroke="#d2a93a"/>
<rect x="867.5" y="392" width="1" height="15" fill="#fed35f" stroke="#d2a93a"/>
<rect x="895.5" y="392" width="9" height="15" fill="#fed35f" stroke="#d2a93a"/>
<rect x="907.5" y="392" width="0.5" height="15" fill="#fed35f" stroke="#d2a93a"/>
<rect x="910.5" y="392" width="5" height="15" fill="#fed35f" stroke="#d2a93a"/>
<rect x="918.5" y="392" width="0.5" height="15" fill="#fed35f" stroke="#d2a93a"/>
<rect x="922.5" y="392" width="1" height="15" fill="#fed35f" stroke="#d2a93a"/>
<rect x="928.5" y="392" width="3" height="15" fill="#fed35f" stroke="#d2a93a"/>
<rect x="935.5" y="392" width="0.5" height="15" fill="#fed35f" stroke="#d2a93a"/>
<rect x="945.5" y="392" width="6" height="15" fill="#fed35f" stroke="#d2a93a"/>
<rect x="954.5" y="392" width="3" height="15" fill="#fed35f" stroke="#d2a93a"/>
<rect x="961.5" y="392" width="5" height="15" fill="#fed35f" stroke="#d2a93a"/>
<rect x="979.5" y="392" width="1" height="15" fill="#fed35f" stroke="#d2a93a"/>
<rect x="1003.5" y="392" width="1" height="15" fill="#fed35f" stroke="#d2a93a"/>
<rect x="1016.5" y="392" width="1" height="15" fill="#fed35f" stroke="#d2a93a"/>
<rect x="1019.5" y="392" width="0.5" height="15" fill="#fed35f" stroke="#d2a93a"/>
<rect x="1039.5" y="392" width="1" height="15" fill="#fed35f" stroke="#d2a93a"/>
<rect x="1052.5" y="392" width="1" height="15" fill="#fed35f" stroke="#d2a93a"/>
<rect x="1056.5" y="392" width="3" height="15" fill="#fed35f" stroke="#d2a93a"/>
<rect x="1089.5" y="392" width="2" height="15" fill="#fed35f" stroke="#d2a93a"/>
<rect x="1093.5" y="392" width="2" height="15" fill="#fed35f" stroke="#d2a93a"/>
<rect x="1098.5" y="392" width="2" height="15" fill="#fed35f" stroke="#d2a93a"/>
<rect x="1103.5" y="392" width="1" height="15" fill="#fed35f" stroke="#d2a93a"/>
<rect x="29.5" y="375" width="13" height="15" fill="#fed35f" stroke="#d2a93a"/>
<rect x="125.5" y="375" width="22" height="15" fill="#fed35f" stroke="#d2a93a"/>
<rect x="149.5" y="375" width="5" height="15" fill="#fed35f" stroke="#d2a93a"/>
<rect x="165.5" y="375" width="5" height="15" fill="#fed35f" stroke="#d2a93a"/>
<rect x="173.5" y="375" width="6" height="15" fill="#fed35f" stroke="#d2a93a"/>
<rect x="180.5" y="375" width="5" height="15" fill="#fed35f" stroke="#d2a93a"/>
<rect x="193.5" y="375" width="7" height="15" fill="#fed35f" stroke="#d2a93a"/>
<rect x="204.5" y="375" width="6" height="15" fill="#fed35f" stroke="#d2a93a"/>
<rect x="212.5" y="375" width="7" height="15" fill="#fed35f" stroke="#d2a93a"/>
<rect x="221.5" y="375" width="8" height="15" fill="#fed35f" stroke="#d2a93a"/>
<rect x="248.5" y="375" width="1" height="15" fill="#fed35f" stroke="#d2a93a"/>
<rect x="251.5" y="375" width="6" height="15" fill="#fed35f" stroke="#d2a93a"/>
<rect x="260.5" y="375" width="0.5" height="15" fill="#fed35f" stroke="#d2a93a"/>
<rect x="298.5" y="375" width="0.5" height="15" fill="#fed35f" stroke="#d2a93a"/>
<rect x="311.5" y="375" width="35" height="15" fill="#fed35f" stroke="#d2a93a"/>
<rect x="349.5" y="375" width="0.5" height="15" fill="#fed35f" stroke="#d2a93a"/>
<rect x="350.5" y="375" width="12" height="15" fill="#fed35f" stroke="#d2a93a"/>
<rect x="373.5" y="375" width="4" height="15" fill="#fed35f" stroke="#d2a93a"/>
<rect x="393.5" y="375" width="0.5" height="15" fill="#fed35f" stroke="#d2a93a"/>
<rect x="463.5" y="375" width="21" height="15" fill="#fed35f" stroke="#d2a93a"/>
<rect x="499.5" y="375" width="13" height="15" fill="#fed35f" stroke="#d2a93a"/>
<rect x="520.5" y="375" width="15" height="15" fill="#fed35f" stroke="#d2a93a"/>
<rect x="547.5" y="375" width="0.5" height="15" fill="#fed35f" stroke="#d2a93a"/>
<rect x="556.5" y="375" width="116" height="15" fill="#fdca60" stroke="#d2a53a"/>
<rect x="673.5" y="375" width="18" height="15" fill="#fed35f" stroke="#d2a93a"/>
<rect x="692.5" y="375" width="2" height="15" fill="#fed35f" stroke="#d2a93a"/>
<rect x="695.5" y="375" width="11" height="15" fill="#fed35f" stroke="#d2a93a"/>
<rect x="707.5" y="375" width="5" height="15" fill="#fed35f" stroke="#d2a93a"/>
<rect x="713.5" y="375" width="1" height="15" fill="#fed35f" stroke="#d2a93a"/>
<rect x="715.5" y="375" width="6" height="15" fill="#fed35f" stroke="#d2a93a"/>
<rect x="723.5" y="375" width="1" height="15" fill="#fed35f" stroke="#d2a93a"/>
<rect x="727.5" y="375" width="2" height="15" fill="#fed35f" stroke="#d2a93a"/>
<rect x="737.5" y="375" width="1" height="15" fill="#fed35f" stroke="#d2a93a"/>
<rect x="770.5" y="375" width="0.5" height="15" fill="#fed35f" stroke="#d2a93a"/>
<rect x="801.5" y="375" width="1" height="15" fill="#fed35f" stroke="#d2a93a"/>
<rect x="844.5" y="375" width="3" height="15" fill="#fed35f" stroke="#d2a93a"/>
<rect x="895.5" y="375" width="9" height="15" fill="#fed35f" stroke="#d2a93a"/>
<rect x="907.5" y="375" width="0.5" height="15" fill="#fed35f" stroke="#d2a93a"/>
<rect x="910.5" y="375" width="5" height="15" fill="#fed35f" stroke="#d2a93a"/>
<rect x="918.5" y="375" width="0.5" height="15" fill="#fed35f" stroke="#d2a93a"/>
<rect x="929.5" y="375" width="1" height="15" fill="#fed35f" stroke="#d2a93a"/>
<rect x="946.5" y="375" width="1" height="15" fill="#fed35f" stroke="#d2a93a"/>
<rect x="954.5" y="375" width="4" height="15" fill="#fed35f" stroke="#d2a93a"/>
<rect x="979.5" y="375" width="1" height="15" fill="#fed35f" stroke="#d2a93a"/>
<rect x="1039.5" y="375" width="1" height="15" fill="#fed35f" stroke="#d2a93a"/>
<rect x="1052.5" y="375" width="1" height="15" fill="#fed35f" stroke="#d2a93a"/>
<rect x="1056.5" y="375" width="2" height="15" fill="#fed35f" stroke="#d2a93a"/>
<rect x="1089.5" y="375" width="1" height="15" fill="#fed35f" stroke="#d2a93a"/>
<rect x="1093.5" y="375" width="1" height="15" fill="#fed35f" stroke="#d2a93a"/>
<rect x="1099.5" y="375" width="1" height="15" fill="#fed35f" stroke="#d2a93a"/>
<rect x="1102.5" y="375" width="1" height="15" fill="#fed35f" stroke="#d2a93a"/>
<rect x="29.5" y="358" width="11" height="15" fill="#fed35f" stroke="#d2a93a"/>
<rect x="126.5" y="358" width="21" height="15" fill="#fed35f" stroke="#d2a93a"/>
<rect x="149.5" y="358" width="4" height="15" fill="#fed35f" stroke="#d2a93a"/>
<rect x="165.5" y="358" width="1" height="15" fill="#fed35f" stroke="#d2a93a"/>
<rect x="169.5" y="358" width="1" height="15" fill="#fed35f" stroke="#d2a93a"/>
<rect x="173.5" y="358" width="6" height="15" fill="#fed35f" stroke="#d2a93a"/>
<rect x="180.5" y="358" width="5" height="15" fill="#fed35f" stroke="#d2a93a"/>
<rect x="193.5" y="358" width="7" height="15" fill="#fed35f" stroke="#d2a93a"/>
<rect x="204.5" y="358" width="6" height="15" fill="#fed35f" stroke="#d2a93a"/>
<rect x="212.5" y="358" width="5" height="15" fill="#fed35f" stroke="#d2a93a"/>
<rect x="221.5" y="358" width="6" height="15" fill="#fed35f" stroke="#d2a93a"/>
<rect x="228.5" y="358" width="1" height="15" fill="#fed35f" stroke="#d2a93a"/>
<rect x="251.5" y="358" width="4" height="15" fill="#fed35f" stroke="#d2a93a"/>
<rect x="260.5" y="358" width="0.5" height="15" fill="#fed35f" stroke="#d2a93a"/>
<rect x="311.5" y="358" width="34" height="15" fill="#fed35f" stroke="#d2a93a"/>
<rect x="349.5" y="358" width="0.5" height="15" fill="#fed35f" stroke="#d2a93a"/>
<rect x="350.5" y="358" width="12" height="15" fill="#fed35f" stroke="#d2a93a"/>
<rect x="373.5" y="358" width="0.5" height="15" fill="#fed35f" stroke="#d2a93a"/>
<rect x="377.5" y="358" width="0.5" height="15" fill="#fed35f" stroke="#d2a93a"/>
<rect x="393.5" y="358" width="0.5" height="15" fill="#fed35f" stroke="#d2a93a"/>
<rect x="463.5" y="358" width="21" height="15" fill="#fed35f" stroke="#d2a93a"/>
<rect x="499.5" y="358" width="5" height="15" fill="#fed35f" stroke="#d2a93a"/>
<rect x="505.5" y="358" width="6" height="15" fill="#fed35f" stroke="#d2a93a"/>
<rect x="525.5" y="358" width="9" height="15" fill="#fed35f" stroke="#d2a93a"/>
<rect x="547.5" y="358" width="0.5" height="15" fill="#fed35f" stroke="#d2a93a"/>
<rect x="556.5" y="358" width="107" height="15" fill="#fdca60" stroke="#d2a53a"/>
<rect x="664.5" y="358" width="5" height="15" fill="#fed35f" stroke="#d2a93a"/>
<rect x="673.5" y="358" width="1" height="15" fill="#fed35f" stroke="#d2a93a"/>
<rect x="675.5" y="358" width="9" height="15" fill="#fed35f" stroke="#d2a93a"/>
<rect x="685.5" y="358" width="2" height="15" fill="#fed35f" stroke="#d2a93a"/>
<rect x="689.5" y="358" width="1" height="15" fill="#fed35f" stroke="#d2a93a"/>
<rect x="693.5" y="358" width="2" height="15" fill="#fed35f" stroke="#d2a93a"/>
<rect x="697.5" y="358" width="4" height="15" fill="#fed35f" stroke="#d2a93a"/>
<rect x="707.5" y="358" width="2" height="15" fill="#fed35f" stroke="#d2a93a"/>
<rect x="713.5" y="358" width="2" height="15" fill="#fed35f" stroke="#d2a93a"/>
<rect x="716.5" y="358" width="2" height="15" fill="#fed35f" stroke="#d2a93a"/>
<rect x="719.5" y="358" width="2" height="15" fill="#fed35f" stroke="#d2a93a"/>
<rect x="723.5" y="358" width="1" height="15" fill="#fed35f" stroke="#d2a93a"/>
<rect x="727.5" y="358" width="1" height="15" fill="#fed35f" stroke="#d2a93a"/>
<rect x="801.5" y="358" width="1" height="15" fill="#fed35f" stroke="#d2a93a"/>
<rect x="844.5" y="358" width="2" height="15" fill="#fed35f" stroke="#d2a93a"/>
<rect x="895.5" y="358" width="7" height="15" fill="#fed35f" stroke="#d2a93a"/>
<rect x="907.5" y="358" width="0.5" height="15" fill="#fed35f" stroke="#d2a93a"/>
<rect x="910.5" y="358" width="5" height="15" fill="#fed35f" stroke="#d2a93a"/>
<rect x="918.5" y="358" width="0.5" height="15" fill="#fed35f" stroke="#d2a93a"/>
<rect x="929.5" y="358" width="1" height="15" fill="#fed35f" stroke="#d2a93a"/>
<rect x="955.5" y="358" width="1" height="15" fill="#fed35f" stroke="#d2a93a"/>
<rect x="1039.5" y="358" width="1" height="15" fill="#fed35f" stroke="#d2a93a"/>
<rect x="1099.5" y="358" width="1" height="15" fill="#fed35f" stroke="#d2a93a"/>
<rect x="1102.5" y="358" width="1" height="15" fill="#fed35f" stroke="#d2a93a"/>
<rect x="29.5" y="341" width="11" height="15" fill="#fed35f" stroke="#d2a93a"/>
<rect x="127.5" y="341" width="20" height="15" fill="#fed35f" stroke="#d2a93a"/>
<rect x="149.5" y="341" width="4" height="15" fill="#fed35f" stroke="#d2a93a"/>
<rect x="173.5" y="341" width="6" height="15" fill="#fed35f" stroke="#d2a93a"/>
<rect x="180.5" y="341" width="5" height="15" fill="#fed35f" stroke="#d2a93a"/>
<rect x="193.5" y="341" width="7" height="15" fill="#fed35f" stroke="#d2a93a"/>
<rect x="204.5" y="341" width="6" height="15" fill="#fed35f" stroke="#d2a93a"/>
<rect x="212.5" y="341" width="5" height="15" fill="#fed35f" stroke="#d2a93a"/>
<rect x="221.5" y="341" width="6" height="15" fill="#fed35f" stroke="#d2a93a"/>
<rect x="252.5" y="341" width="0.5" height="15" fill="#fed35f" stroke="#d2a93a"/>
<rect x="260.5" y="341" width="0.5" height="15" fill="#fed35f" stroke="#d2a93a"/>
<rect x="311.5" y="341" width="31" height="15" fill="#fed35f" stroke="#d2a93a"/>
<rect x="349.5" y="341" width="1" height="15" fill="#fed35f" stroke="#d2a93a"/>
<rect x="351.5" y="341" width="11" height="15" fill="#fed35f" stroke="#d2a93a"/>
<rect x="373.5" y="341" width="0.5" height="15" fill="#fed35f" stroke="#d2a93a"/>
<rect x="377.5" y="341" width="0.5" height="15" fill="#fed35f" stroke="#d2a93a"/>
<rect x="393.5" y="341" width="0.5" height="15" fill="#fed35f" stroke="#d2a93a"/>
<rect x="463.5" y="341" width="21" height="15" fill="#fed35f" stroke="#d2a93a"/>
<rect x="499.5" y="341" width="5" height="15" fill="#fed35f" stroke="#d2a93a"/>
<rect x="511.5" y="341" width="0.5" height="15" fill="#fed35f" stroke="#d2a93a"/>
<rect x="547.5" y="341" width="0.5" height="15" fill="#fed35f" stroke="#d2a93a"/>
<rect x="556.5" y="341" width="101" height="15" fill="#fdca60" stroke="#d2a53a"/>
<rect x="658.5" y="341" width="5" height="15" fill="#fed35f" stroke="#d2a93a"/>
<rect x="673.5" y="341" width="1" height="15" fill="#fed35f" stroke="#d2a93a"/>
<rect x="675.5" y="341" width="7" height="15" fill="#fed35f" stroke="#d2a93a"/>
<rect x="685.5" y="341" width="2" height="15" fill="#fed35f" stroke="#d2a93a"/>
<rect x="697.5" y="341" width="4" height="15" fill="#fed35f" stroke="#d2a93a"/>
<rect x="707.5" y="341" width="1" height="15" fill="#fed35f" stroke="#d2a93a"/>
<rect x="713.5" y="341" width="1" height="15" fill="#fed35f" stroke="#d2a93a"/>
<rect x="716.5" y="341" width="1" height="15" fill="#fed35f" stroke="#d2a93a"/>
<rect x="723.5" y="341" width="1" height="15" fill="#fed35f" stroke="#d2a93a"/>
<rect x="727.5" y="341" width="1" height="15" fill="#fed35f" stroke="#d2a93a"/>
<rect x="801.5" y="341" width="1" height="15" fill="#fed35f" stroke="#d2a93a"/>
<rect x="845.5" y="341" width="1" height="15" fill="#fed35f" stroke="#d2a93a"/>
<rect x="895.5" y="341" width="5" height="15" fill="#fed35f" stroke="#d2a93a"/>
<rect x="907.5" y="341" width="1" height="15" fill="#fed35f" stroke="#d2a93a"/>
<rect x="910.5" y="341" width="5" height="15" fill="#fed35f" stroke="#d2a93a"/>
<rect x="918.5" y="341" width="0.5" height="15" fill="#fed35f" stroke="#d2a93a"/>
<rect x="929.5" y="341" width="1" height="15" fill="#fed35f" stroke="#d2a93a"/>
<rect x="955.5" y="341" width="1" height="15" fill="#fed35f" stroke="#d2a93a"/>
<rect x="1099.5" y="341" width="1" height="15" fill="#fed35f" stroke="#d2a93a"/>
<rect x="1102.5" y="341" width="1" height="15" fill="#fed35f" stroke="#d2a93a"/>
<rect x="29.5" y="324" width="12" height="15" fill="#fed35f" stroke="#d2a93a"/>
<rect x="127.5" y="324" width="20" height="15" fill="#fed35f" stroke="#d2a93a"/>
<rect x="148.5" y="324" width="1" height="15" fill="#fed35f" stroke="#d2a93a"/>
<rect x="173.5" y="324" width="3" height="15" fill="#fed35f" stroke="#d2a93a"/>
<rect x="177.5" y="324" width="5" height="15" fill="#fed35f" stroke="#d2a93a"/>
<rect x="185.5" y="324" width="1" height="15" fill="#fed35f" stroke="#d2a93a"/>
<rect x="196.5" y="324" width="3" height="15" fill="#fed35f" stroke="#d2a93a"/>
<rect x="205.5" y="324" width="3" height="15" fill="#fed35f" stroke="#d2a93a"/>
<rect x="214.5" y="324" width="4" height="15" fill="#fed35f" stroke="#d2a93a"/>
<rect x="221.5" y="324" width="6" height="15" fill="#fed35f" stroke="#d2a93a"/>
<rect x="252.5" y="324" width="0.5" height="15" fill="#fed35f" stroke="#d2a93a"/>
<rect x="260.5" y="324" width="0.5" height="15" fill="#fed35f" stroke="#d2a93a"/>
<rect x="311.5" y="324" width="31" height="15" fill="#fed35f" stroke="#d2a93a"/>
<rect x="349.5" y="324" width="1" height="15" fill="#fed35f" stroke="#d2a93a"/>
<rect x="353.5" y="324" width="8" height="15" fill="#fed35f" stroke="#d2a93a"/>
<rect x="373.5" y="324" width="1" height="15" fill="#fed35f" stroke="#d2a93a"/>
<rect x="393.5" y="324" width="0.5" height="15" fill="#fed35f" stroke="#d2a93a"/>
<rect x="463.5" y="324" width="21" height="15" fill="#fed35f" stroke="#d2a93a"/>
<rect x="511.5" y="324" width="0.5" height="15" fill="#fed35f" stroke="#d2a93a"/>
<rect x="556.5" y="324" width="99" height="15" fill="#fdca60" stroke="#d2a53a"/>
<rect x="656.5" y="324" width="2" height="15" fill="#fed35f" stroke="#d2a93a"/>
<rect x="673.5" y="324" width="1" height="15" fill="#fed35f" stroke="#d2a93a"/>
<rect x="675.5" y="324" width="4" height="15" fill="#fed35f" stroke="#d2a93a"/>
<rect x="685.5" y="324" width="1" height="15" fill="#fed35f" stroke="#d2a93a"/>
<rect x="697.5" y="324" width="4" height="15" fill="#fed35f" stroke="#d2a93a"/>
<rect x="707.5" y="324" width="1" height="15" fill="#fed35f" stroke="#d2a93a"/>
<rect x="716.5" y="324" width="1" height="15" fill="#fed35f" stroke="#d2a93a"/>
<rect x="723.5" y="324" width="1" height="15" fill="#fed35f" stroke="#d2a93a"/>
<rect x="727.5" y="324" width="1" height="15" fill="#fed35f" stroke="#d2a93a"/>
<rect x="801.5" y="324" width="1" height="15" fill="#fed35f" stroke="#d2a93a"/>
<rect x="845.5" y="324" width="1" height="15" fill="#fed35f" stroke="#d2a93a"/>
<rect x="895.5" y="324" width="3" height="15" fill="#fed35f" stroke="#d2a93a"/>
<rect x="907.5" y="324" width="1" height="15" fill="#fed35f" stroke="#d2a93a"/>
<rect x="910.5" y="324" width="5" height="15" fill="#fed35f" stroke="#d2a93a"/>
<rect x="918.5" y="324" width="0.5" height="15" fill="#fed35f" stroke="#d2a93a"/>
<rect x="929.5" y="324" width="1" height="15" fill="#fed35f" stroke="#d2a93a"/>
<rect x="1099.5" y="324" width="1" height="15" fill="#fed35f" stroke="#d2a93a"/>
<rect x="1102.5" y="324" width="1" height="15" fill="#fed35f" stroke="#d2a93a"/>
<rect x="127.5" y="307" width="20" height="15" fill="#fed35f" stroke="#d2a93a"/>
<rect x="173.5" y="307" width="3" height="15" fill="#fed35f" stroke="#d2a93a"/>
<rect x="180.5" y="307" width="2" height="15" fill="#fed35f" stroke="#d2a93a"/>
<rect x="185.5" y="307" width="1" height="15" fill="#fed35f" stroke="#d2a93a"/>
<rect x="196.5" y="307" width="3" height="15" fill="#fed35f" stroke="#d2a93a"/>
<rect x="205.5" y="307" width="1" height="15" fill="#fed35f" stroke="#d2a93a"/>
<rect x="214.5" y="307" width="3" height="15" fill="#fed35f" stroke="#d2a93a"/>
<rect x="221.5" y="307" width="5" height="15" fill="#fed35f" stroke="#d2a93a"/>
<rect x="260.5" y="307" width="0.5" height="15" fill="#fed35f" stroke="#d2a93a"/>
<rect x="312.5" y="307" width="3" height="15" fill="#fed35f" stroke="#d2a93a"/>
<rect x="316.5" y="307" width="24" height="15" fill="#fed35f" stroke="#d2a93a"/>
<rect x="349.5" y="307" width="1" height="15" fill="#fed35f" stroke="#d2a93a"/>
<rect x="353.5" y="307" width="8" height="15" fill="#fed35f" stroke="#d2a93a"/>
<rect x="373.5" y="307" width="1" height="15" fill="#fed35f" stroke="#d2a93a"/>
<rect x="463.5" y="307" width="21" height="15" fill="#fed35f" stroke="#d2a93a"/>
<rect x="511.5" y="307" width="0.5" height="15" fill="#fed35f" stroke="#d2a93a"/>
<rect x="556.5" y="307" width="95" height="15" fill="#fdca60" stroke="#d2a53a"/>
<rect x="656.5" y="307" width="1" height="15" fill="#fed35f" stroke="#d2a93a"/>
<rect x="673.5" y="307" width="1" height="15" fill="#fed35f" stroke="#d2a93a"/>
<rect x="675.5" y="307" width="3" height="15" fill="#fed35f" stroke="#d2a93a"/>
<rect x="685.5" y="307" width="1" height="15" fill="#fed35f" stroke="#d2a93a"/>
<rect x="697.5" y="307" width="2" height="15" fill="#fed35f" stroke="#d2a93a"/>
<rect x="716.5" y="307" width="1" height="15" fill="#fed35f" stroke="#d2a93a"/>
<rect x="723.5" y="307" width="1" height="15" fill="#fed35f" stroke="#d2a93a"/>
<rect x="727.5" y="307" width="1" height="15" fill="#fed35f" stroke="#d2a93a"/>
<rect x="801.5" y="307" width="1" height="15" fill="#fed35f" stroke="#d2a93a"/>
<rect x="845.5" y="307" width="1" height="15" fill="#fed35f" stroke="#d2a93a"/>
<rect x="894.5" y="307" width="1" height="15" fill="#fed35f" stroke="#d2a93a"/>
<rect x="912.5" y="307" width="3" height="15" fill="#fed35f" stroke="#d2a93a"/>
<rect x="918.5" y="307" width="1" height="15" fill="#fed35f" stroke="#d2a93a"/>
<rect x="929.5" y="307" width="1" height="15" fill="#fed35f" stroke="#d2a93a"/>
<rect x="1099.5" y="307" width="1" height="15" fill="#fed35f" stroke="#d2a93a"/>
<rect x="1102.5" y="307" width="1" height="15" fill="#fed35f" stroke="#d2a93a"/>
<rect x="127.5" y="290" width="20" height="15" fill="#fed35f" stroke="#d2a93a"/>
<rect x="173.5" y="290" width="3" height="15" fill="#fed35f" stroke="#d2a93a"/>
<rect x="180.5" y="290" width="1" height="15" fill="#fed35f" stroke="#d2a93a"/>
<rect x="185.5" y="290" width="0.5" height="15" fill="#fed35f" stroke="#d2a93a"/>
<rect x="205.5" y="290" width="1" height="15" fill="#fed35f" stroke="#d2a93a"/>
<rect x="215.5" y="290" width="1" height="15" fill="#fed35f" stroke="#d2a93a"/>
<rect x="221.5" y="290" width="6" height="15" fill="#fed35f" stroke="#d2a93a"/>
<rect x="312.5" y="290" width="5" height="15" fill="#fed35f" stroke="#d2a93a"/>
<rect x="318.5" y="290" width="2" height="15" fill="#fed35f" stroke="#d2a93a"/>
<rect x="322.5" y="290" width="2" height="15" fill="#fed35f" stroke="#d2a93a"/>
<rect x="326.5" y="290" width="12" height="15" fill="#fed35f" stroke="#d2a93a"/>
<rect x="339.5" y="290" width="1" height="15" fill="#fed35f" stroke="#d2a93a"/>
<rect x="349.5" y="290" width="1" height="15" fill="#fed35f" stroke="#d2a93a"/>
<rect x="354.5" y="290" width="5" height="15" fill="#fed35f" stroke="#d2a93a"/>
<rect x="374.5" y="290" width="0.5" height="15" fill="#fed35f" stroke="#d2a93a"/>
<rect x="463.5" y="290" width="21" height="15" fill="#fed35f" stroke="#d2a93a"/>
<rect x="511.5" y="290" width="0.5" height="15" fill="#fed35f" stroke="#d2a93a"/>
<rect x="556.5" y="290" width="94" height="15" fill="#fdca60" stroke="#d2a53a"/>
<rect x="673.5" y="290" width="1" height="15" fill="#fed35f" stroke="#d2a93a"/>
<rect x="675.5" y="290" width="2" height="15" fill="#fed35f" stroke="#d2a93a"/>
<rect x="727.5" y="290" width="1" height="15" fill="#fed35f" stroke="#d2a93a"/>
<rect x="801.5" y="290" width="1" height="15" fill="#fed35f" stroke="#d2a93a"/>
<rect x="845.5" y="290" width="1" height="15" fill="#fed35f" stroke="#d2a93a"/>
<rect x="912.5" y="290" width="3" height="15" fill="#fed35f" stroke="#d2a93a"/>
<rect x="929.5" y="290" width="1" height="15" fill="#fed35f" stroke="#d2a93a"/>
<rect x="1099.5" y="290" width="1" height="15" fill="#fed35f" stroke="#d2a93a"/>
<rect x="127.5" y="273" width="20" height="15" fill="#fed35f" stroke="#d2a93a"/>
<rect x="173.5" y="273" width="3" height="15" fill="#fed35f" stroke="#d2a93a"/>
<rect x="180.5" y="273" width="1" height="15" fill="#fed35f" stroke="#d2a93a"/>
<rect x="205.5" y="273" width="1" height="15" fill="#fed35f" stroke="#d2a93a"/>
<rect x="215.5" y="273" width="1" height="15" fill="#fed35f" stroke="#d2a93a"/>
<rect x="222.5" y="273" width="1" height="15" fill="#fed35f" stroke="#d2a93a"/>
<rect x="312.5" y="273" width="5" height="15" fill="#fed35f" stroke="#d2a93a"/>
<rect x="326.5" y="273" width="11" height="15" fill="#fed35f" stroke="#d2a93a"/>
<rect x="355.5" y="273" width="2" height="15" fill="#fed35f" stroke="#d2a93a"/>
<rect x="374.5" y="273" width="0.5" height="15" fill="#fed35f" stroke="#d2a93a"/>
<rect x="463.5" y="273" width="19" height="15" fill="#fed35f" stroke="#d2a93a"/>
<rect x="483.5" y="273" width="1" height="15" fill="#fed35f" stroke="#d2a93a"/>
<rect x="511.5" y="273" width="0.5" height="15" fill="#fed35f" stroke="#d2a93a"/>
<rect x="556.5" y="273" width="90" height="15" fill="#fdca60" stroke="#d2a53a"/>
<rect x="647.5" y="273" width="2" height="15" fill="#fed35f" stroke="#d2a93a"/>
<rect x="673.5" y="273" width="0.5" height="15" fill="#fed35f" stroke="#d2a93a"/>
<rect x="845.5" y="273" width="1" height="15" fill="#fed35f" stroke="#d2a93a"/>
<rect x="914.5" y="273" width="1" height="15" fill="#fed35f" stroke="#d2a93a"/>
<rect x="1099.5" y="273" width="1" height="15" fill="#fed35f" stroke="#d2a93a"/>
<rect x="127.5" y="256" width="20" height="15" fill="#fed35f" stroke="#d2a93a"/>
<rect x="173.5" y="256" width="3" height="15" fill="#fed35f" stroke="#d2a93a"/>
<rect x="180.5" y="256" width="1" height="15" fill="#fed35f" stroke="#d2a93a"/>
<rect x="205.5" y="256" width="1" height="15" fill="#fed35f" stroke="#d2a93a"/>
<rect x="215.5" y="256" width="1" height="15" fill="#fed35f" stroke="#d2a93a"/>
<rect x="222.5" y="256" width="0.5" height="15" fill="#fed35f" stroke="#d2a93a"/>
<rect x="312.5" y="256" width="3" height="15" fill="#fed35f" stroke="#d2a93a"/>
<rect x="355.5" y="256" width="2" height="15" fill="#fed35f" stroke="#d2a93a"/>
<rect x="374.5" y="256" width="0.5" height="15" fill="#fed35f" stroke="#d2a93a"/>
<rect x="483.5" y="256" width="1" height="15" fill="#fed35f" stroke="#d2a93a"/>
<rect x="511.5" y="256" width="0.5" height="15" fill="#fed35f" stroke="#d2a93a"/>
<rect x="556.5" y="256" width="89" height="15" fill="#fdca60" stroke="#d2a53a"/>
<rect x="646.5" y="256" width="2" height="15" fill="#fed35f" stroke="#d2a93a"/>
<rect x="673.5" y="256" width="0.5" height="15" fill="#fed35f" stroke="#d2a93a"/>
<rect x="173.5" y="239" width="3" height="15" fill="#fed35f" stroke="#d2a93a"/>
<rect x="205.5" y="239" width="1" height="15" fill="#fed35f" stroke="#d2a93a"/>
<rect x="215.5" y="239" width="1" height="15" fill="#fed35f" stroke="#d2a93a"/>
<rect x="222.5" y="239" width="0.5" height="15" fill="#fed35f" stroke="#d2a93a"/>
<rect x="355.5" y="239" width="2" height="15" fill="#fed35f" stroke="#d2a93a"/>
<rect x="374.5" y="239" width="0.5" height="15" fill="#fed35f" stroke="#d2a93a"/>
<rect x="483.5" y="239" width="1" height="15" fill="#fed35f" stroke="#d2a93a"/>
<rect x="511.5" y="239" width="0.5" height="15" fill="#fed35f" stroke="#d2a93a"/>
<rect x="556.5" y="239" width="84" height="15" fill="#fdca60" stroke="#d2a53a"/>
<rect x="641.5" y="239" width="4" height="15" fill="#fed35f" stroke="#d2a93a"/>
<rect x="673.5" y="239" width="0.5" height="15" fill="#fed35f" stroke="#d2a93a"/>
<rect x="205.5" y="222" width="1" height="15" fill="#fed35f" stroke="#d2a93a"/>
<rect x="215.5" y="222" width="1" height="15" fill="#fed35f" stroke="#d2a93a"/>
<rect x="222.5" y="222" width="0.5" height="15" fill="#fed35f" stroke="#d2a93a"/>
<rect x="374.5" y="222" width="0.5" height="15" fill="#fed35f" stroke="#d2a93a"/>
<rect x="483.5" y="222" width="1" height="15" fill="#fed35f" stroke="#d2a93a"/>
<rect x="511.5" y="222" width="0.5" height="15" fill="#fed35f" stroke="#d2a93a"/>
<rect x="556.5" y="222" width="59" height="15" fill="#fdca60" stroke="#d2a53a"/>
<rect x="616.5" y="222" width="20" height="15" fill="#fed35f" stroke="#d2a93a"/>
<rect x="637.5" y="222" width="3" height="15" fill="#fed35f" stroke="#d2a93a"/>
<rect x="645.5" y="222" width="0.5" height="15" fill="#fed35f" stroke="#d2a93a"/>
<rect x="673.5" y="222" width="0.5" height="15" fill="#fed35f" stroke="#d2a93a"/>
<rect x="205.5" y="205" width="1" height="15" fill="#fed35f" stroke="#d2a93a"/>
<rect x="215.5" y="205" width="1" height="15" fill="#fed35f" stroke="#d2a93a"/>
<rect x="374.5" y="205" width="0.5" height="15" fill="#fed35f" stroke="#d2a93a"/>
<rect x="483.5" y="205" width="1" height="15" fill="#fed35f" stroke="#d2a93a"/>
<rect x="556.5" y="205" width="43" height="15" fill="#fdca60" stroke="#d2a53a"/>
<rect x="600.5" y="205" width="3" height="15" fill="#fed35f" stroke="#d2a93a"/>
<rect x="604.5" y="205" width="3" height="15" fill="#fed35f" stroke="#d2a93a"/>
<rect x="608.5" y="205" width="4" height="15" fill="#fed35f" stroke="#d2a93a"/>
<rect x="615.5" y="205" width="11" height="15" fill="#fed35f" stroke="#d2a93a"/>
<rect x="645.5" y="205" width="1" height="15" fill="#fed35f" stroke="#d2a93a"/>
<rect x="673.5" y="205" width="0.5" height="15" fill="#fed35f" stroke="#d2a93a"/>
<rect x="205.5" y="188" width="1" height="15" fill="#fed35f" stroke="#d2a93a"/>
<rect x="215.5" y="188" width="1" height="15" fill="#fed35f" stroke="#d2a93a"/>
<rect x="374.5" y="188" width="0.5" height="15" fill="#fed35f" stroke="#d2a93a"/>
<rect x="483.5" y="188" width="1" height="15" fill="#fed35f" stroke="#d2a93a"/>
<rect x="556.5" y="188" width="11" height="15" fill="#fed35f" stroke="#d2a93a"/>
<rect x="568.5" y="188" width="11" height="15" fill="#fed35f" stroke="#d2a93a"/>
<rect x="580.5" y="188" width="6" height="15" fill="#fed35f" stroke="#d2a93a"/>
<rect x="600.5" y="188" width="1" height="15" fill="#fed35f" stroke="#d2a93a"/>
<rect x="606.5" y="188" width="1" height="15" fill="#fed35f" stroke="#d2a93a"/>
<rect x="615.5" y="188" width="2" height="15" fill="#fed35f" stroke="#d2a93a"/>
<rect x="619.5" y="188" width="1" height="15" fill="#fed35f" stroke="#d2a93a"/>
<rect x="622.5" y="188" width="3" height="15" fill="#fed35f" stroke="#d2a93a"/>
<rect x="645.5" y="188" width="1" height="15" fill="#fed35f" stroke="#d2a93a"/>
<rect x="673.5" y="188" width="0.5" height="15" fill="#fed35f" stroke="#d2a93a"/>
<rect x="205.5" y="171" width="1" height="15" fill="#fed35f" stroke="#d2a93a"/>
<rect x="215.5" y="171" width="1" height="15" fill="#fed35f" stroke="#d2a93a"/>
<rect x="374.5" y="171" width="0.5" height="15" fill="#fed35f" stroke="#d2a93a"/>
<rect x="483.5" y="171" width="1" height="15" fill="#fed35f" stroke="#d2a93a"/>
<rect x="556.5" y="171" width="3" height="15" fill="#fed35f" stroke="#d2a93a"/>
<rect x="560.5" y="171" width="5" height="15" fill="#fed35f" stroke="#d2a93a"/>
<rect x="568.5" y="171" width="11" height="15" fill="#fed35f" stroke="#d2a93a"/>
<rect x="582.5" y="171" width="1" height="15" fill="#fed35f" stroke="#d2a93a"/>
<rect x="586.5" y="171" width="1" height="15" fill="#fed35f" stroke="#d2a93a"/>
<rect x="606.5" y="171" width="1" height="15" fill="#fed35f" stroke="#d2a93a"/>
<rect x="615.5" y="171" width="3" height="15" fill="#fed35f" stroke="#d2a93a"/>
<rect x="620.5" y="171" width="1" height="15" fill="#fed35f" stroke="#d2a93a"/>
<rect x="623.5" y="171" width="2" height="15" fill="#fed35f" stroke="#d2a93a"/>
<rect x="645.5" y="171" width="1" height="15" fill="#fed35f" stroke="#d2a93a"/>
<rect x="673.5" y="171" width="0.5" height="15" fill="#fed35f" stroke="#d2a93a"/>
<rect x="215.5" y="154" width="1" height="15" fill="#fed35f" stroke="#d2a93a"/>
<rect x="483.5" y="154" width="1" height="15" fill="#fed35f" stroke="#d2a93a"/>
<rect x="559.5" y="154" width="5" height="15" fill="#fed35f" stroke="#d2a93a"/>
<rect x="568.5" y="154" width="11" height="15" fill="#fed35f" stroke="#d2a93a"/>
<rect x="586.5" y="154" width="1" height="15" fill="#fed35f" stroke="#d2a93a"/>
<rect x="606.5" y="154" width="1" height="15" fill="#fed35f" stroke="#d2a93a"/>
<rect x="615.5" y="154" width="2" height="15" fill="#fed35f" stroke="#d2a93a"/>
<rect x="645.5" y="154" width="1" height="15" fill="#fed35f" stroke="#d2a93a"/>
<rect x="215.5" y="137" width="1" height="15" fill="#fed35f" stroke="#d2a93a"/>
<rect x="483.5" y="137" width="1" height="15" fill="#fed35f" stroke="#d2a93a"/>
<rect x="560.5" y="137" width="4" height="15" fill="#fed35f" stroke="#d2a93a"/>
<rect x="568.5" y="137" width="11" height="15" fill="#fed35f" stroke="#d2a93a"/>
<rect x="615.5" y="137" width="1" height="15" fill="#fed35f" stroke="#d2a93a"/>
<rect x="215.5" y="120" width="1" height="15" fill="#fed35f" stroke="#d2a93a"/>
<rect x="578.5" y="120" width="1" height="15" fill="#fed35f" stroke="#d2a93a"/>
<rect x="615.5" y="120" width="1" height="15" fill="#fed35f" stroke="#d2a93a"/>
<rect x="215.5" y="103" width="1" height="15" fill="#fed35f" stroke="#d2a93a"/>
<rect x="578.5" y="103" width="1" height="15" fill="#fed35f" stroke="#d2a93a"/>
<rect x="615.5" y="103" width="1" height="15" fill="#fed35f" stroke="#d2a93a"/>
<rect x="215.5" y="86" width="1" height="15" fill="#fed35f" stroke="#d2a93a"/>
<rect x="615.5" y="86" width="1" height="15" fill="#fed35f" stroke="#d2a93a"/>
<rect x="615.5" y="69" width="1" height="15" fill="#fed35f" stroke="#d2a93a"/>
<rect x="615.5" y="52" width="1" height="15" fill="#fed35f" stroke="#d2a93a"/></g>
<g class="t"><text x="6.7" y="693">[linker]_start</text>
<text x="6.7" y="676">_start</text>
<text x="6.7" y="659">__libc_init</text>
<text x="6.7" y="642">main</text>
<text x="6.7" y="625">android::SurfaceFlinger::run()</text>
<text x="6.7" y="608">android::MessageQueue::waitMessage()</text>
<text x="6.7" y="591">android::Looper::pollOnce(int, int*, int*, void**)</text>
<text x="6.7" y="574">android::Looper::pollInner(int)</text>
<text x="6.7" y="557">__.</text>
<text x="31.7" y="557">android::SurfaceFlinger::onMessageReceived(int)</text>
<text x="31.7" y="540">android::SurfaceFlinger::handleMes..</text>
<text x="308.7" y="540">android::SurfaceFlinger::handleMessageRefresh()</text>
<text x="31.7" y="523">android::SurfaceFlinger::handlePag..</text>
<text x="313.7" y="523">android::SurfaceFlinger::postC..</text>
<text x="558.7" y="523">android::SurfaceFlinger::setUpHWCompose..</text>
<text x="869.7" y="523">android::SurfaceFling..</text>
<text x="31.7" y="506">android::Layer::latchBuffer(b..</text>
<text x="313.7" y="506">android:..</text>
<text x="394.7" y="506">android::Lay..</text>
<text x="558.7" y="506">android::DisplayDevice:..</text>
<text x="753.7" y="506">android::L..</text>
<text x="869.7" y="506">android..</text>
<text x="944.7" y="506">android..</text>
<text x="46.7" y="489">android::SurfaceFlingerCo..</text>
<text x="313.7" y="489">android:..</text>
<text x="394.7" y="489">android::Su..</text>
<text x="558.7" y="489">android::HWComposer::pr..</text>
<text x="869.7" y="489">an..</text>
<text x="947.7" y="489">an..</text>
<text x="46.7" y="472">android::Surf..</text>
<text x="166.7" y="472">android..</text>
<text x="313.7" y="472">std::__..</text>
<text x="394.7" y="472">android::GL..</text>
<text x="558.7" y="472">HWC2::Display::present..</text>
<text x="46.7" y="455">android::GLCo..</text>
<text x="174.7" y="455">andr..</text>
<text x="313.7" y="455">androi..</text>
<text x="394.7" y="455">android::Co..</text>
<text x="558.7" y="455">android::Hwc2::Compose..</text>
<text x="46.7" y="438">android::Cons..</text>
<text x="313.7" y="438">andro..</text>
<text x="394.7" y="438">android::B..</text>
<text x="558.7" y="438">android::Hwc2::Compos..</text>
<text x="46.7" y="421">android::Buff..</text>
<text x="313.7" y="421">andr..</text>
<text x="394.7" y="421" font-weight="bold" style="stroke-width:0">android..</text>
<text x="558.7" y="421">android::hardware::g..</text>
<text x="47.7" y="404">android:..</text>
<text x="313.7" y="404">and..</text>
<text x="558.7" y="404">android::hard..</text>
<text x="313.7" y="387">sy..</text>
<text x="558.7" y="387">android::hard..</text>
<text x="313.7" y="370">__..</text>
<text x="558.7" y="370">android::har..</text>
<text x="313.7" y="353">el..</text>
<text x="558.7" y="353">android::ha..</text>
<text x="313.7" y="336">sy..</text>
<text x="558.7" y="336">__ioctl</text>
<text x="558.7" y="319">el0_svc_na..</text>
<text x="558.7" y="302">sys_ioctl</text>
<text x="558.7" y="285">do_vfs_ioc..</text>
<text x="558.7" y="268">binder_io..</text>
<text x="558.7" y="251">binder_io..</text>
<text x="558.7" y="234">binde..</text>
<text x="558.7" y="217">bin..</text></g>
</svg>
</body></html>
